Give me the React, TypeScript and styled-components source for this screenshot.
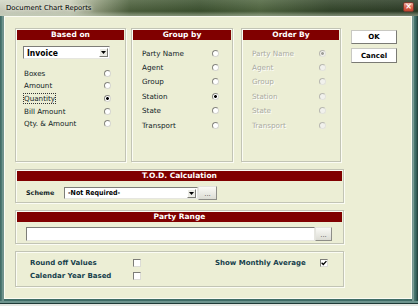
import React from 'react';
import styled, { createGlobalStyle } from 'styled-components';

const GlobalStyle = createGlobalStyle`
  html, body {
    margin: 0;
    padding: 0;
    background: #e4e7e2;
  }
  body {
    font-family: "DejaVu Sans", Tahoma, sans-serif;
  }
`;

const BASED_ON = ['Boxes', 'Amount', 'Quantity', 'Bill Amount', 'Qty. & Amount'];
const GROUPS = ['Party Name', 'Agent', 'Group', 'Station', 'State', 'Transport'];

function RadioList({
  items,
  checked,
  rowHeight,
  disabled,
  focused,
  pl,
  pr,
  pt,
}: {
  items: string[];
  checked: number;
  rowHeight: number;
  disabled?: boolean;
  focused?: number;
  pl: number;
  pr: number;
  pt: number;
}) {
  return (
    <OptionList $pl={pl} $pr={pr} $pt={pt}>
      {items.map((item, i) => (
        <OptionRow key={item} $h={rowHeight}>
          <OptionLabel $disabled={disabled} $focused={focused === i}>
            {item}
          </OptionLabel>
          <Radio $checked={checked === i} $disabled={disabled} />
        </OptionRow>
      ))}
    </OptionList>
  );
}

function Check() {
  return (
    <svg width="6" height="6" viewBox="0 0 6 6">
      <path d="M0.6 2.8 L2.3 4.5 L5.4 1.1" fill="none" stroke="#000" strokeWidth="1.3" />
    </svg>
  );
}

function DownArrow() {
  return (
    <svg width="5" height="3" viewBox="0 0 5 3">
      <polygon points="0,0 5,0 2.5,3" fill="#000" />
    </svg>
  );
}

export default function App() {
  return (
    <>
      <GlobalStyle />
      <Window>
        <TitleBar>
          <Caption>Document Chart Reports</Caption>
          <CloseButton>×</CloseButton>
        </TitleBar>
        <Body>
          <MainColumn>
            <TopRow>
              <Panel $h={134}>
                <PanelHeader>Based on</PanelHeader>
                <InvoiceCombo>
                  <ComboText $size={8.5}>Invoice</ComboText>
                  <DropButton>
                    <DownArrow />
                  </DropButton>
                </InvoiceCombo>
                <RadioList items={BASED_ON} checked={2} focused={2} rowHeight={12.6} pl={7} pr={13} pt={8} />
              </Panel>
              <Panel $h={134}>
                <PanelHeader>Group by</PanelHeader>
                <RadioList items={GROUPS} checked={3} rowHeight={14.4} pl={9} pr={12} pt={6} />
              </Panel>
              <Panel $h={134}>
                <PanelHeader>Order By</PanelHeader>
                <RadioList items={GROUPS} checked={0} disabled rowHeight={14.4} pl={9} pr={13} pt={6} />
              </Panel>
            </TopRow>

            <Panel $h={34}>
              <PanelHeader>T.O.D. Calculation</PanelHeader>
              <SchemeRow>
                <FieldLabel>Scheme</FieldLabel>
                <SchemeCombo>
                  <ComboText $size={7}>-Not Required-</ComboText>
                  <DropButton>
                    <DownArrow />
                  </DropButton>
                </SchemeCombo>
                <EllipsisButton $w={19} $h={14}>...</EllipsisButton>
              </SchemeRow>
            </Panel>

            <Panel $h={34}>
              <PanelHeader>Party Range</PanelHeader>
              <RangeRow>
                <TextField />
                <EllipsisButton $w={17} $h={14}>...</EllipsisButton>
              </RangeRow>
            </Panel>

            <Panel $h={36}>
              <FlagGrid>
                <FlagLabel>Round off Values</FlagLabel>
                <CheckBox />
                <span />
                <FlagLabel>Show Monthly Average</FlagLabel>
                <CheckBox>
                  <Check />
                </CheckBox>
                <FlagLabel>Calendar Year Based</FlagLabel>
                <CheckBox />
              </FlagGrid>
            </Panel>
          </MainColumn>

          <SideColumn>
            <DialogButton $h={14}>OK</DialogButton>
            <DialogButton $h={15}>Cancel</DialogButton>
          </SideColumn>
        </Body>
      </Window>
    </>
  );
}

const Window = styled.div`
  width: 418px;
  height: 304px;
  box-sizing: border-box;
  display: flex;
  flex-direction: column;
  background: linear-gradient(90deg, #2e4f4b 0, #5b8a83 1px, #3f6c66 2px, #9fb7b0 3px, #3f6c66 4px, #3f6c66 calc(100% - 6px), #a9beb8 calc(100% - 5px), #4c7a73 calc(100% - 4px), #3a6660 calc(100% - 2px), #1f3a37 100%);
  padding: 0 6px 5px 4px;
  box-shadow: inset 0 -1px 0 #1f3a37, inset 0 -3px 0 #6d948e;
`;

const TitleBar = styled.div`
  height: 16px;
  margin: 0 -6px 0 -4px;
  flex-shrink: 0;
  display: flex;
  align-items: center;
  justify-content: space-between;
  padding: 0 4px 0 6px;
  background:
    linear-gradient(180deg, rgba(255, 255, 255, 0.12), rgba(0, 0, 0, 0.08) 70%, rgba(180, 190, 170, 0.5) 95%),
    linear-gradient(90deg, #d3d7c6 0, #cdd2bd 70px, #8c9878 100px, #4f633f 130px, #3e5431 200px, #526842 260px, #34472b 330px, #2d3d27 100%);
`;

const Caption = styled.span`
  font-size: 6.9px;
  color: #000;
  text-shadow: 0 0 3px #eef0e4, 0 0 5px #eef0e4;
`;

const CloseButton = styled.span`
  width: 11px;
  height: 10px;
  margin-top: -2px;
  border-radius: 2px;
  background: linear-gradient(180deg, #eeb0a0, #d9604a 55%, #c4452e);
  border: 1px solid #7a3a2e;
  box-sizing: border-box;
  color: #fff;
  font-size: 8px;
  line-height: 7px;
  text-align: center;
  font-weight: bold;
`;

const Body = styled.div`
  flex: 1;
  display: flex;
  gap: 7px;
  padding: 12px 0 0 11px;
  background: #eceed5;
  box-shadow: inset 1px 1px 0 #fafbf2, inset -1px -1px 0 #fafbf2;
`;

const MainColumn = styled.div`
  width: 329px;
  display: flex;
  flex-direction: column;
  gap: 7px;
`;

const TopRow = styled.div`
  display: grid;
  grid-template-columns: 111px 102px 103px;
  column-gap: 5px;
  & > :last-child {
    margin-left: 3px;
  }
`;

const Panel = styled.section<{ $h: number }>`
  box-sizing: border-box;
  height: ${(p) => p.$h}px;
  padding: 1px;
  border: 1px solid #c2c4b5;
  box-shadow: inset 1px 1px 0 #fbfcf4, 1px 1px 0 #fbfcf4;
  display: flex;
  flex-direction: column;
`;

const PanelHeader = styled.div`
  height: 10px;
  flex-shrink: 0;
  background: #800000;
  color: #fff;
  font-size: 7.5px;
  font-weight: bold;
  line-height: 10px;
  text-align: center;
`;

const OptionList = styled.div<{ $pl: number; $pr: number; $pt: number }>`
  display: flex;
  flex-direction: column;
  padding: ${(p) => `${p.$pt}px ${p.$pr}px 0 ${p.$pl}px`};
`;

const OptionRow = styled.div<{ $h: number }>`
  height: ${(p) => p.$h}px;
  display: flex;
  align-items: center;
  justify-content: space-between;
`;

const OptionLabel = styled.span<{ $disabled?: boolean; $focused?: boolean }>`
  font-size: 7.2px;
  line-height: 9px;
  color: ${(p) => (p.$disabled ? '#a9aaa2' : '#101c26')};
  text-shadow: ${(p) => (p.$disabled ? '1px 1px 0 #fff' : 'none')};
  outline: ${(p) => (p.$focused ? '1px dotted #333' : 'none')};
`;

const Radio = styled.span<{ $checked?: boolean; $disabled?: boolean }>`
  width: 7px;
  height: 7px;
  box-sizing: border-box;
  border-radius: 50%;
  border: 1px solid;
  border-color: ${(p) =>
    p.$disabled ? '#b8b8b0 #e2e2dc #e2e2dc #b8b8b0' : '#86867f #d6d6d0 #d6d6d0 #86867f'};
  background: ${(p) => {
    const fill = p.$disabled ? '#f1f1ec' : '#ffffff';
    const dot = p.$disabled ? '#a0a09a' : '#000';
    return p.$checked ? `radial-gradient(circle, ${dot} 0 1.2px, ${fill} 1.6px)` : fill;
  }};
`;

const ComboBase = styled.div`
  box-sizing: border-box;
  display: flex;
  align-items: center;
  justify-content: space-between;
  background: #fff;
  border: 1px solid;
  border-color: #7d7d78 #e6e6e0 #e6e6e0 #7d7d78;
  padding: 0 1px 0 3px;
`;

const InvoiceCombo = styled(ComboBase)`
  width: 87px;
  height: 13px;
  margin: 6px 0 0 6px;
`;

const SchemeCombo = styled(ComboBase)`
  width: 134px;
  height: 12px;
`;

const ComboText = styled.span<{ $size: number }>`
  font-family: "DejaVu Sans Condensed", "DejaVu Sans", sans-serif;
  font-size: ${(p) => p.$size}px;
  font-weight: bold;
  color: #000;
`;

const DropButton = styled.span`
  width: 9px;
  height: 9px;
  box-sizing: border-box;
  display: flex;
  align-items: center;
  justify-content: center;
  background: #ecece6;
  border: 1px solid;
  border-color: #fff #7c7c76 #7c7c76 #fff;
`;

const SchemeRow = styled.div`
  display: flex;
  align-items: center;
  height: 14px;
  margin-top: 5px;
  padding-left: 9px;
`;

const FieldLabel = styled.span`
  width: 38px;
  font-size: 6.4px;
  font-weight: bold;
  color: #101c26;
`;

const EllipsisButton = styled.span<{ $w: number; $h: number }>`
  width: ${(p) => p.$w}px;
  height: ${(p) => p.$h}px;
  box-sizing: border-box;
  display: flex;
  align-items: center;
  justify-content: center;
  padding-top: 2px;
  font-size: 7px;
  line-height: 7px;
  color: #5a5a55;
  background: linear-gradient(180deg, #fafaf6, #dcdcd4);
  border: 1px solid;
  border-color: #e4e4de #8e8e88 #8e8e88 #e4e4de;
`;

const RangeRow = styled.div`
  display: flex;
  margin-top: 5px;
  padding-left: 9px;
`;

const TextField = styled.div`
  width: 289px;
  height: 14px;
  box-sizing: border-box;
  background: #fff;
  border: 1px solid;
  border-color: #7d7d78 #e6e6e0 #e6e6e0 #7d7d78;
`;

const FlagGrid = styled.div`
  display: grid;
  grid-template-columns: 103px 8px 74px 105px 8px;
  grid-auto-rows: 13px;
  align-items: center;
  padding: 3px 0 0 13px;
`;

const FlagLabel = styled.span`
  font-size: 7px;
  font-weight: bold;
  color: #163f4c;
`;

const CheckBox = styled.span`
  width: 8px;
  height: 8px;
  box-sizing: border-box;
  display: flex;
  align-items: center;
  justify-content: center;
  background: #fff;
  border: 1px solid;
  border-color: #7d7d78 #dcdcd6 #dcdcd6 #7d7d78;
`;

const SideColumn = styled.div`
  width: 46px;
  display: flex;
  flex-direction: column;
  gap: 4px;
  padding-top: 2px;
`;

const DialogButton = styled.button<{ $h: number }>`
  height: ${(p) => p.$h}px;
  padding: 0;
  box-sizing: border-box;
  font-family: "DejaVu Sans", sans-serif;
  font-size: 7px;
  font-weight: bold;
  color: #000;
  background: #fff;
  border: 1px solid;
  border-color: #c8c8c2 #7a7a74 #7a7a74 #c8c8c2;
`;
